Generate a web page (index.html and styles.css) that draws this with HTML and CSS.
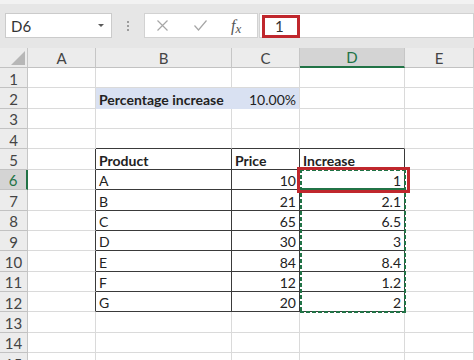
FILE: index.html
```html
<!DOCTYPE html>
<html>
  <head>
    <link rel="stylesheet" href="styles.css">
  </head>
  <body>
    <div class="toolbar">
      <div class="namebox"><span>D6</span><span class="caret"></span></div>
      <div class="grip"><i></i><i></i><i></i></div>
      <div class="buttons">
        <svg class="cancel" width="11" height="11" viewBox="0 0 11 11">
          <path d="M0.5 0.5 L10.5 10.5 M10.5 0.5 L0.5 10.5" stroke="#a6a6a6" stroke-width="1.2" fill="none"/>
        </svg>
        <svg class="enter" width="13" height="11" viewBox="0 0 13 11">
          <path d="M0.5 5.5 L4.5 10 L12.5 0.5" stroke="#a6a6a6" stroke-width="1.2" fill="none"/>
        </svg>
        <span class="fx">f<span>x</span></span>
      </div>
      <div class="formula"><span class="value">1</span></div>
    </div>

    <div class="sheet">
      <div class="corner"></div><div class="col">A</div><div class="col">B</div><div class="col">C</div><div class="col sel">D</div><div class="col">E</div>

      <div class="row">1</div><div></div><div></div><div></div><div></div><div></div>
      <div class="row">2</div><div></div><div class="fill b">Percentage increase</div><div class="fill n last">10.00%</div><div></div><div></div>
      <div class="row">3</div><div></div><div></div><div></div><div></div><div></div>
      <div class="row">4</div><div></div><div class="tb"></div><div class="tb"></div><div class="tb"></div><div></div>
      <div class="row">5</div><div class="tr"></div><div class="t b">Product</div><div class="t b">Price</div><div class="t b">Increase</div><div></div>
      <div class="row sel">6</div><div class="tr"></div><div class="t">A</div><div class="t n">10</div><div class="t n">1</div><div></div>
      <div class="row">7</div><div class="tr"></div><div class="t">B</div><div class="t n">21</div><div class="t n">2.1</div><div></div>
      <div class="row">8</div><div class="tr"></div><div class="t">C</div><div class="t n">65</div><div class="t n">6.5</div><div></div>
      <div class="row">9</div><div class="tr"></div><div class="t">D</div><div class="t n">30</div><div class="t n">3</div><div></div>
      <div class="row">10</div><div class="tr"></div><div class="t">E</div><div class="t n">84</div><div class="t n">8.4</div><div></div>
      <div class="row">11</div><div class="tr"></div><div class="t">F</div><div class="t n">12</div><div class="t n">1.2</div><div></div>
      <div class="row">12</div><div class="tr"></div><div class="t">G</div><div class="t n">20</div><div class="t n">2</div><div></div>
      <div class="row">13</div><div></div><div></div><div></div><div></div><div></div>
      <div class="row">14</div><div></div><div></div><div></div><div></div><div></div>
      <div class="row">15</div><div></div><div></div><div></div><div></div><div></div>

      <!-- copy marquee D6:D12, active cell, red callout -->
      <div class="marquee"></div>
      <div class="active"></div>
      <div class="callout"></div>
    </div>
  </body>
</html>
```

FILE: styles.css
```css
* {
  box-sizing: border-box;
}
body {
  margin: 0;
  width: 474px;
  height: 360px;
  overflow: hidden;
  background: #fff;
  font-family: Lato, "Liberation Sans", sans-serif;
  color: #222;
}

/* formula bar */
.toolbar {
  height: 48px;
  background: #e6e6e6;
  border-top: 4px solid #f2f2f2;
  padding: 9px 0 0 5px;
  display: flex;
  align-items: flex-start;
}
.namebox {
  width: 107px;
  height: 25px;
  background: #fff;
  border: 1px solid #cbcbcb;
  padding: 0 7px 0 5px;
  display: flex;
  align-items: center;
  justify-content: space-between;
  font-size: 15px;
  color: #333;
}
.caret {
  border-left: 3px solid transparent;
  border-right: 3px solid transparent;
  border-top: 3px solid #5a5a5a;
}
.grip {
  width: 32px;
  padding-top: 8px;
  display: flex;
  flex-direction: column;
  align-items: center;
  gap: 2px;
}
.grip i {
  width: 2px;
  height: 2px;
  background: #9c9c9c;
}
.buttons {
  width: 114px;
  height: 25px;
  background: #fff;
  border: 1px solid #d2d2d2;
  display: flex;
  align-items: center;
}
.cancel {
  margin-left: 12px;
}
.enter {
  margin-left: 26px;
}
.fx {
  margin-left: 24px;
  font-family: "Liberation Serif", serif;
  font-style: italic;
  font-size: 16px;
  color: #555;
}
.fx span {
  font-size: 13px;
  position: relative;
  top: 2px;
}
.formula {
  flex: 1;
  height: 25px;
  margin-left: 1px;
  background: #fff;
  border: 1px solid #d2d2d2;
}
.value {
  display: inline-block;
  width: 38px;
  height: 23px;
  margin: 1px 0 0 2px;
  padding-left: 10px;
  border: 3px solid #c0272d;
  font-size: 15px;
  line-height: 17px;
  color: #333;
}

/* grid */
.sheet {
  position: relative;
  display: grid;
  grid-template-columns: 28px 68px 136px 68px 105px 69px;
  grid-template-rows: 20px repeat(15, 20.36px);
  font-size: 14px;
}
.sheet > div {
  border-right: 1px solid #dadada;
  border-bottom: 1px solid #dadada;
  padding: 0 3px;
  display: flex;
  align-items: flex-end;
  white-space: nowrap;
  overflow: hidden;
}
.sheet > .corner, .sheet > .col, .sheet > .row {
  background: #ececec;
  color: #444;
  font-size: 15px;
  align-items: center;
  justify-content: center;
  border-right-color: #c6c6c6;
  border-bottom-color: #c2c2c2;
}
.sheet > .row {
  padding-top: 2px;
}
.corner {
  position: relative;
}
.corner::after {
  content: "";
  position: absolute;
  right: 2px;
  bottom: 2px;
  border-left: 14px solid transparent;
  border-bottom: 14px solid #b7b7b7;
}
.sheet > .col.sel {
  background: #d4d4d4;
  color: #217346;
  border-bottom: 2px solid #217346;
}
.sheet > .row.sel {
  background: #d4d4d4;
  color: #217346;
  border-right: 2px solid #217346;
}
.b {
  font-weight: bold;
}
.n {
  justify-content: flex-end;
}
.sheet > .fill {
  background: #d9e1f2;
  border-color: #d9e1f2;
}
.sheet > .fill.last {
  border-right-color: #dadada;
}
.sheet > .tb {
  border-bottom-color: #3a3a3a;
}
.sheet > .tr {
  border-right-color: #3a3a3a;
}
.sheet > .t {
  border-right-color: #3a3a3a;
  border-bottom-color: #3a3a3a;
}

/* overlays */
.sheet > .marquee {
  position: absolute;
  grid-column: 5 / 6;
  grid-row: 7 / 14;
  top: -1px;
  left: 0;
  right: -1px;
  bottom: -1px;
  border: 0;
  padding: 0;
  background:
    linear-gradient(90deg, #217346 4px, transparent 0) top left / 6px 2px repeat-x,
    linear-gradient(90deg, #217346 4px, transparent 0) bottom left / 6px 2px repeat-x,
    linear-gradient(#217346 4px, transparent 0) top left / 2px 6px repeat-y,
    linear-gradient(#217346 4px, transparent 0) top right / 2px 6px repeat-y;
}
.sheet > .active {
  position: absolute;
  grid-column: 5 / 6;
  grid-row: 7 / 8;
  top: 0;
  left: 2px;
  right: 1px;
  bottom: 0;
  padding: 0;
  border: 0;
  border-bottom: 2px solid #217346;
}
.sheet > .callout {
  position: absolute;
  grid-column: 5 / 6;
  grid-row: 7 / 8;
  top: -3px;
  left: -3px;
  right: -5px;
  bottom: -3px;
  padding: 0;
  border: 3px solid #c0272d;
}
```
